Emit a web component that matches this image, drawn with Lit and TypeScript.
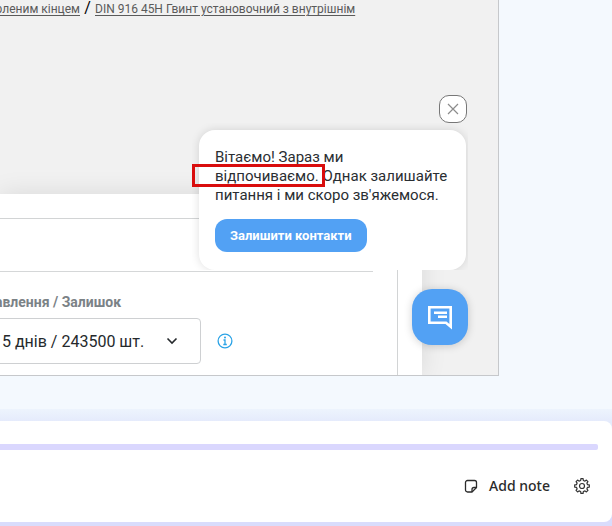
import { LitElement, html, css } from "lit";
import { customElement, property } from "lit/decorators.js";

@customElement("shop-page")
class ShopPage extends LitElement {
  static styles = css`
    :host {
      display: block;
      position: relative;
      overflow: hidden;
      border: solid #c6c8cb;
      border-width: 0 1px 1px 0;
      background: #f1f1f1;
      font-family: Roboto, "Liberation Sans", sans-serif;
    }
    .crumbs {
      display: flex;
      align-items: baseline;
      height: 194px;
      font-size: 12px;
      line-height: 16px;
      white-space: nowrap;
    }
    .crumbs a {
      color: #5a5a5a;
      text-underline-offset: 2px;
    }
    .parent {
      display: flex;
      justify-content: flex-end;
      width: 80px;
    }
    .slash {
      width: 15px;
      text-align: center;
      font-size: 16px;
      color: #000;
    }
    .sheet {
      margin-right: 76px;
      padding: 24px 24px 0 0;
      background: #fff;
      box-shadow: 0 0 24px rgba(0, 0, 0, 0.1);
    }
    .card {
      border: solid #d2d4d5;
      border-width: 1px 1px 0 0;
      padding-right: 24px;
    }
    .head {
      height: 52px;
      border-bottom: 1px solid #d5d7d8;
    }
    .label {
      display: flex;
      justify-content: flex-end;
      width: 121px;
      padding: 20px 0 6px;
      font-size: 14px;
      line-height: 20px;
      font-weight: 700;
      color: #7b8286;
      white-space: nowrap;
    }
    .row {
      display: flex;
      align-items: center;
      gap: 16px;
      padding-bottom: 11px;
    }
    .picker {
      position: relative;
      margin-left: -8px;
    }
    select {
      display: block;
      appearance: none;
      box-sizing: border-box;
      width: 209px;
      height: 46px;
      padding: 0 40px 0 9px;
      border: 1px solid #ced0d2;
      border-radius: 4px;
      background: #fff;
      color: #25292c;
      font: 16px Roboto, "Liberation Sans", sans-serif;
    }
    .chevron {
      position: absolute;
      right: 23px;
      top: 17px;
      pointer-events: none;
    }
    svg {
      display: block;
    }
    .info {
      padding: 0;
      border: 0;
      background: none;
    }
  `;

  render() {
    return html`
      <nav class="crumbs">
        <span class="parent"><a href="#">рленим кінцем</a></span>
        <span class="slash">/</span>
        <a href="#">DIN 916 45H Гвинт установочний з внутрішнім</a>
      </nav>
      <div class="sheet">
        <div class="card">
          <div class="head"></div>
          <label class="label" for="term">авлення / Залишок</label>
          <div class="row">
            <div class="picker">
              <select id="term">
                <option>5 днів / 243500 шт.</option>
              </select>
              <svg class="chevron" width="12" height="12" viewBox="0 0 12 12" fill="none" stroke="#25292c" stroke-width="1.6">
                <path d="M1.5 3.5 6 8l4.5-4.5" />
              </svg>
            </div>
            <button class="info" aria-label="Інформація">
              <svg width="16" height="16" viewBox="0 0 16 16" fill="none" stroke="#2ba3e6">
                <circle cx="8" cy="8" r="6.9" stroke-width="1.3" />
                <path d="M6.5 7H8v4.500M6.300 11.500h3.500" stroke-width="1.3" />
                <circle cx="8" cy="4.5" r="1" fill="#2ba3e6" stroke="none" />
              </svg>
            </button>
          </div>
        </div>
      </div>
      <chat-widget></chat-widget>
    `;
  }
}

@customElement("chat-widget")
class ChatWidget extends LitElement {
  static styles = css`
    :host {
      position: absolute;
      right: 30px;
      top: 95px;
      display: flex;
      flex-direction: column;
      align-items: flex-end;
      width: 276px;
    }
    button {
      border: 0;
      padding: 0;
      font-family: inherit;
    }
    svg {
      display: block;
    }
    .close {
      display: grid;
      place-items: center;
      box-sizing: border-box;
      width: 28px;
      height: 28px;
      margin-right: 1px;
      border: 1px solid #777;
      border-radius: 10px;
      background: #fff;
    }
    .frame {
      align-self: stretch;
      overflow: hidden;
      padding: 7px 2px 0 7px;
    }
    .bubble {
      padding: 18px 16px;
      border-radius: 16px;
      background: #fff;
      box-shadow: 0 0 10px rgba(0, 0, 0, 0.13);
      font-size: 15px;
      line-height: 19px;
      color: #2a2e32;
    }
    .bubble p {
      margin: 0 0 14px;
    }
    .contact {
      display: block;
      height: 33px;
      padding: 0 15px;
      border-radius: 12px;
      background: #52a1f4;
      color: #fff;
      font-size: 13px;
      font-weight: 700;
    }
    .open {
      display: grid;
      place-items: center;
      width: 56px;
      height: 56px;
      margin: 19px 0 0;
      border-radius: 20px;
      background: #52a1f4;
      box-shadow: 0 1px 8px rgba(0, 0, 0, 0.18);
    }
    .mark {
      position: absolute;
      left: 0;
      top: 69px;
      box-sizing: border-box;
      width: 133px;
      height: 23px;
      border: 3px solid #d90d0d;
    }
  `;

  render() {
    return html`
      <button class="close" aria-label="Закрити">
        <svg width="12" height="12" viewBox="0 0 12 12" stroke="#8c8c8c" stroke-width="1.2">
          <path d="M1 1l10 10M11 1L1 11" />
        </svg>
      </button>
      <div class="frame">
        <div class="bubble">
          <p>Вітаємо! Зараз ми<br />відпочиваємо. Однак залишайте<br />питання і ми скоро зв'яжемося.</p>
          <button class="contact">Залишити контакти</button>
        </div>
      </div>
      <button class="open" aria-label="Чат">
        <svg width="26" height="26" viewBox="0 0 26 26" fill="none" stroke="#fff" stroke-width="2.6">
          <path d="M2.300 3.300h21.400v19.500L19 18.800H2.300z" />
          <path d="M7 8.700h13M11 12.700h9" stroke-width="2.4" />
        </svg>
      </button>
      <div class="mark"></div>
    `;
  }
}

@customElement("note-bar")
class NoteBar extends LitElement {
  @property() label = "Add note";

  static styles = css`
    :host {
      display: block;
      padding: 12px 0 4px;
      background: linear-gradient(#edf4fd, #e5ebfc 12px, #d9dcfc 90%);
      font-family: "Noto Sans", "Open Sans", sans-serif;
    }
    .card {
      padding: 23px 14px 18px 0;
      border-radius: 0 8px 8px 0;
      background: #fff;
    }
    .track {
      height: 6px;
      border-radius: 0 2px 2px 0;
      background: #dad7fe;
    }
    .tools {
      display: flex;
      justify-content: flex-end;
      align-items: center;
      gap: 24px;
      height: 36px;
      padding: 18px 8px 0 0;
    }
    button {
      display: flex;
      align-items: center;
      gap: 10px;
      padding: 0;
      border: 0;
      background: none;
      color: #2b2b2b;
      font: 500 14px/20px "Noto Sans", "Open Sans", sans-serif;
    }
    svg {
      display: block;
    }
  `;

  private gear() {
    const teeth = 8;
    const points: string[] = [];
    for (let i = 0; i < teeth; i++) {
      const steps: [number, number][] = [[-0.3, 5.7], [-0.19, 7.4], [0.19, 7.4], [0.3, 5.7]];
      for (const [offset, radius] of steps) {
        const angle = ((i + offset) / teeth) * Math.PI * 2;
        points.push(`${(8 + radius * Math.sin(angle)).toFixed(2)} ${(8 - radius * Math.cos(angle)).toFixed(2)}`);
      }
    }
    return `M${points.join("L")}Z`;
  }

  render() {
    return html`
      <div class="card">
        <div class="track"></div>
        <div class="tools">
          <button>
            <svg width="16" height="16" viewBox="0 0 16 16" fill="none" stroke="#2b2b2b" stroke-width="1.3" stroke-linejoin="round">
              <path d="M4.500 2.500h7a2 2 0 0 1 2 2V9.500L9 14H4.500a2 2 0 0 1-2-2V4.500a2 2 0 0 1 2-2z" />
              <path d="M13.500 9.500H11a2 2 0 0 0-2 2V14" />
            </svg>
            ${this.label}
          </button>
          <button aria-label="Settings">
            <svg width="16" height="16" viewBox="0 0 16 16" fill="none" stroke="#333" stroke-width="1.2" stroke-linejoin="round">
              <path d=${this.gear()} />
              <circle cx="8" cy="8" r="2.5" />
            </svg>
          </button>
        </div>
      </div>
    `;
  }
}

@customElement("app-root")
class AppRoot extends LitElement {
  static styles = css`
    :host {
      display: flex;
      flex-direction: column;
      gap: 33px;
      min-height: 100vh;
      background: #f4f9fe;
    }
    shop-page {
      margin-right: 113px;
    }
  `;

  render() {
    return html`
      <shop-page></shop-page>
      <note-bar></note-bar>
    `;
  }
}
